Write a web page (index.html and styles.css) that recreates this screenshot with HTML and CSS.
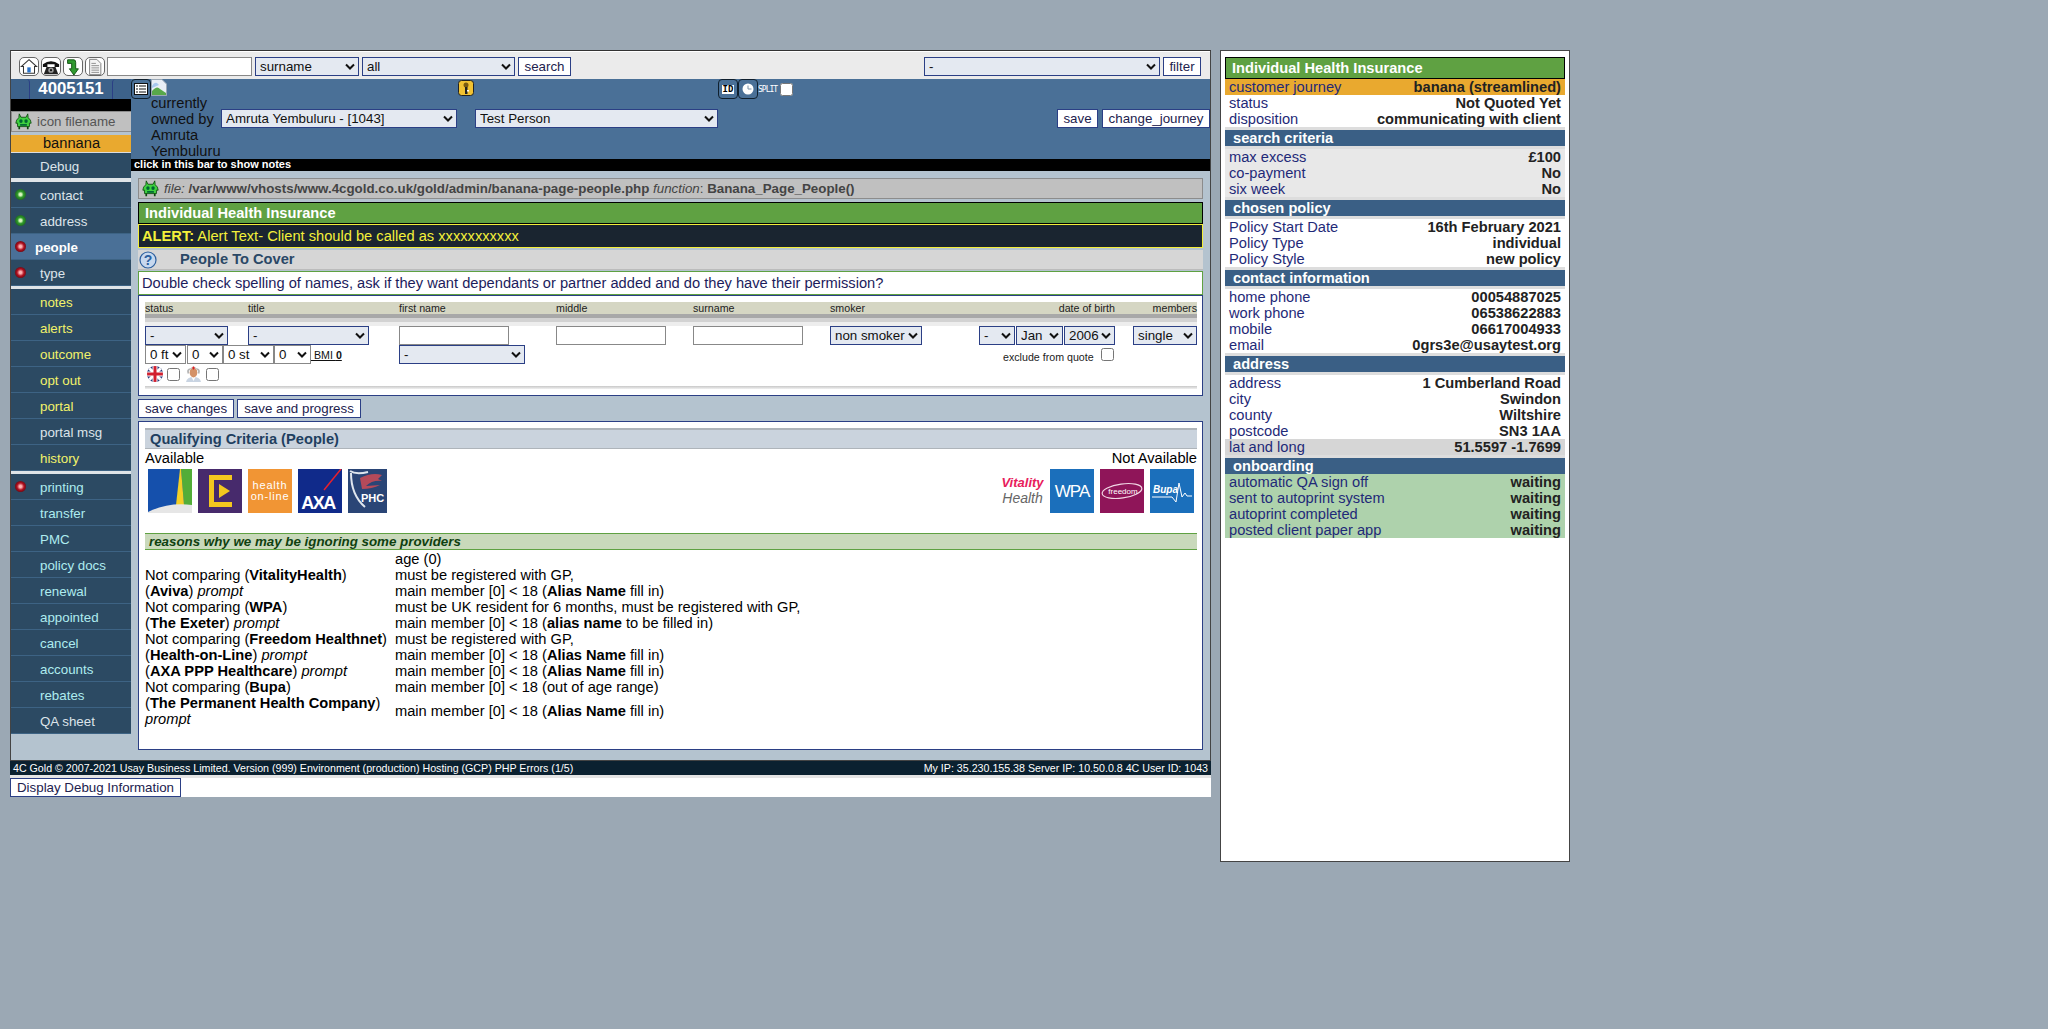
FILE: index.html
```html
<!DOCTYPE html>
<html lang="en">
<head>
  <meta charset="UTF-8" />
  <title>4C Gold - People</title>
  <link rel="stylesheet" href="styles.css">
</head>
<body>
<div class="page">

  <div class="main">
    <div class="shell">
      <div class="toolbar">
        <a class="tool-btn"><svg viewBox="0 0 20 20" width="18" height="17"><path d="M10 2 L19 10 L16.500 10 L16.500 18 L3.500 18 L3.500 10 L1 10 Z" fill="#fff" stroke="#333" stroke-width="1.200"/><rect x="8" y="11" width="4" height="6" fill="#2a72c8"/></svg></a>
        <a class="tool-btn"><svg viewBox="0 0 20 20" width="18" height="18"><path d="M1 7 Q10 0 19 7 L19 10 L14 10 L14 7 L6 7 L6 10 L1 10 Z" fill="#111"/><path d="M5 10 L15 10 L18 18 L2 18 Z" fill="#222"/><circle cx="10" cy="13.500" r="3" fill="#999"/><circle cx="10" cy="13.500" r="1.200" fill="#111"/></svg></a>
        <a class="tool-btn"><svg viewBox="0 0 20 20" width="18" height="18"><path d="M4 2 L11 2 Q13 2 13 5 L13 12 L16 12 L11 19 L6 12 L8.500 12 L8.500 6 L4 6 Z" fill="#2f9a2f" stroke="#0c4d0c"/></svg></a>
        <a class="tool-btn"><svg viewBox="0 0 20 20" width="18" height="18"><path d="M4 1.500 L12 1.500 L16.500 6 L16.500 18.500 L4 18.500 Z" fill="#f4f4f4" stroke="#777"/><path d="M6 6 H11 M6 8.500 H14.500 M6 11 H14.500 M6 13.500 H14.500 M6 16 H14.500" stroke="#888"/></svg></a>
        <input class="field search-input" type="text" />
        <select class="pick pick-surname"><option>surname</option></select>
        <select class="pick pick-all"><option>all</option></select>
        <button class="btn btn-search">search</button>
        <select class="pick pick-filter"><option>-</option></select>
        <button class="btn btn-filter">filter</button>
      </div>

      <div class="workspace">
        <div class="sidebar">
          <div class="id-row"><span class="id-tab"></span><span class="id-num">4005151</span><span class="id-tab id-tab-right"></span></div>
          <div class="black-gap"></div>
          <div class="icon-row">
            <svg class="alien" viewBox="0 0 20 20" width="17" height="17"><path d="M5 1 L7 5 H13 L15 1 L15.500 5.500 Q19 8 19 12 L17 12 L17 16 L3 16 L3 12 L1 12 Q1 8 4.500 5.500 Z" fill="#3fd13f" stroke="#0d4a0d"/><ellipse cx="7" cy="9.500" rx="2" ry="2.200" fill="#063"/><ellipse cx="13" cy="9.500" rx="2" ry="2.200" fill="#063"/><rect x="6" y="13" width="8" height="2" fill="#063"/><path d="M5 16 V19 M15 16 V19" stroke="#0d4a0d" stroke-width="2"/></svg>
            <span>icon filename</span>
          </div>
          <div class="journey-row">bannana</div>
          <a class="nav-item nav-grey nav-first">Debug</a>
          <div class="nav-sep nav-sep-thick"></div>
          <a class="nav-item nav-grey"><span class="led led-green"></span>contact</a>
          <a class="nav-item nav-grey"><span class="led led-green"></span>address</a>
          <a class="nav-item nav-active"><span class="led led-red"></span>people</a>
          <a class="nav-item nav-grey"><span class="led led-red"></span>type</a>
          <div class="nav-sep"></div>
          <a class="nav-item nav-yellow">notes</a>
          <a class="nav-item nav-yellow">alerts</a>
          <a class="nav-item nav-yellow">outcome</a>
          <a class="nav-item nav-yellow">opt out</a>
          <a class="nav-item nav-yellow">portal</a>
          <a class="nav-item nav-grey">portal msg</a>
          <a class="nav-item nav-yellow">history</a>
          <div class="nav-sep"></div>
          <a class="nav-item nav-cyan"><span class="led led-red"></span>printing</a>
          <a class="nav-item nav-cyan">transfer</a>
          <a class="nav-item nav-cyan">PMC</a>
          <a class="nav-item nav-cyan">policy docs</a>
          <a class="nav-item nav-cyan">renewal</a>
          <a class="nav-item nav-cyan">appointed</a>
          <a class="nav-item nav-cyan">cancel</a>
          <a class="nav-item nav-cyan">accounts</a>
          <a class="nav-item nav-cyan">rebates</a>
          <a class="nav-item nav-grey">QA sheet</a>
        </div>

        <div class="column">
          <div class="bluebar">
            <div class="blue-icons">
              <a class="mini-btn"><svg viewBox="0 0 14 12" width="14" height="12"><rect x="0.500" y="0.500" width="13" height="11" fill="#fff" stroke="#111"/><path d="M2 3 H4 M5 3 H12 M2 6 H4 M5 6 H12 M2 9 H4 M5 9 H12" stroke="#111" stroke-width="1.200"/></svg></a>
              <svg class="broken-img" viewBox="0 0 16 17" width="16" height="17"><path d="M0.500 0.500 H11 L15.500 5 V16.500 H0.500 Z" fill="#e8eef6" stroke="#9aa7b5"/><path d="M1 16 L1 12 Q6 6 9 10 L15 14 V16 Z" fill="#58a84a"/><path d="M1 7 Q3 3 6 4 L8 6 L1 9 Z" fill="#a8c8ee"/></svg>
              <span class="key-icon"><svg viewBox="0 0 16 16" width="16" height="16"><rect x="0.500" y="0.500" width="15" height="15" rx="3" fill="#f1c232" stroke="#222"/><circle cx="8" cy="5" r="2.500" fill="#7a5a10"/><rect x="7" y="7" width="2.500" height="7" fill="#222"/><rect x="9" y="10" width="2" height="1.500" fill="#fff"/></svg></span>
              <a class="mini-btn mini-id"><span>ID</span></a>
              <a class="mini-btn mini-clock"><svg viewBox="0 0 12 12" width="12" height="12"><circle cx="6" cy="6" r="5.500" fill="#fff"/><path d="M6 2.500 V6 H9.500" stroke="#7d93a8" fill="none"/></svg></a>
              <span class="split-label">SPLIT</span>
              <input class="tick tick-split" type="checkbox" />
            </div>
            <div class="blue-form">
              <div class="owner-text">currently owned by Amruta Yembuluru</div>
              <select class="pick pick-owner"><option>Amruta Yembuluru - [1043]</option></select>
              <select class="pick pick-person"><option>Test Person</option></select>
              <button class="btn btn-save">save</button>
              <button class="btn btn-journey">change_journey</button>
            </div>
          </div>
          <div class="notes-bar">click in this bar to show notes</div>

          <div class="content">
            <div class="file-bar">
              <svg class="alien" viewBox="0 0 20 20" width="17" height="17"><path d="M5 1 L7 5 H13 L15 1 L15.500 5.500 Q19 8 19 12 L17 12 L17 16 L3 16 L3 12 L1 12 Q1 8 4.500 5.500 Z" fill="#3fd13f" stroke="#0d4a0d"/><ellipse cx="7" cy="9.500" rx="2" ry="2.200" fill="#063"/><ellipse cx="13" cy="9.500" rx="2" ry="2.200" fill="#063"/><rect x="6" y="13" width="8" height="2" fill="#063"/><path d="M5 16 V19 M15 16 V19" stroke="#0d4a0d" stroke-width="2"/></svg>
              <span><i>file:</i> <b>/var/www/vhosts/www.4cgold.co.uk/gold/admin/banana-page-people.php</b> <i>function</i>: <b>Banana_Page_People()</b></span>
            </div>
            <div class="green-bar">Individual Health Insurance</div>
            <div class="alert-bar"><b>ALERT:</b> Alert Text- Client should be called as xxxxxxxxxxx</div>
            <div class="section-bar">
              <svg class="help-icon" viewBox="0 0 18 18" width="18" height="18"><circle cx="9" cy="9" r="8" fill="#c7d8ee" stroke="#2c5f9e" stroke-width="1.200"/><text x="9" y="14" class="help-mark">?</text></svg>
              <span>People To Cover</span>
            </div>
            <div class="hint-box">Double check spelling of names, ask if they want dependants or partner added and do they have their permission?</div>

            <div class="form-box">
              <div class="form-head">
                <span>status</span><span>title</span><span>first name</span><span>middle</span><span>surname</span><span>smoker</span><span class="right">date of birth</span><span class="right">members</span>
              </div>
              <div class="form-stripe"></div>
              <div class="form-row">
                <select class="pick pick-status"><option>-</option></select>
                <select class="pick pick-title"><option>-</option></select>
                <input class="field input-name" type="text" />
                <input class="field input-name" type="text" />
                <input class="field input-name" type="text" />
                <select class="pick pick-smoker"><option>non smoker</option></select>
                <div class="dob">
                  <select class="pick pick-day"><option>-</option></select>
                  <select class="pick pick-month"><option>Jan</option></select>
                  <select class="pick pick-year"><option>2006</option></select>
                </div>
                <select class="pick pick-members"><option>single</option></select>
              </div>
              <div class="form-row">
                <div class="size-cell">
                  <select class="pick plain pick-ft"><option>0 ft</option></select>
                  <select class="pick plain pick-in"><option>0</option></select>
                  <select class="pick plain pick-st"><option>0 st</option></select>
                  <select class="pick plain pick-lb"><option>0</option></select>
                  <span class="bmi">&nbsp;BMI <b>0</b></span>
                </div>
                <select class="pick pick-second"><option>-</option></select>
                <div class="exclude-cell"><span>exclude from quote</span><input class="tick" type="checkbox" /></div>
              </div>
              <div class="flag-row">
                <svg viewBox="0 0 16 16" width="16" height="16"><defs><clipPath id="disc"><circle cx="8" cy="8" r="8"/></clipPath></defs><g clip-path="url(#disc)"><rect width="16" height="16" fill="#28397a"/><path d="M0 0 L16 16 M16 0 L0 16" stroke="#fff" stroke-width="3"/><path d="M8 0 V16 M0 8 H16" stroke="#fff" stroke-width="5"/><path d="M8 0 V16 M0 8 H16" stroke="#d2202f" stroke-width="3"/></g></svg>
                <input class="tick" type="checkbox" />
                <svg class="nurse" viewBox="0 0 17 16" width="17" height="16"><path d="M1 16 Q2 11 8.500 11 Q15 11 16 16 Z" fill="#c9d4e2"/><path d="M6.500 11 L8.500 15 L10.500 11 Z" fill="#fff"/><ellipse cx="8.500" cy="6.500" rx="3.800" ry="5" fill="#d49268"/><path d="M4 4 Q8.500 -2 13 4 L11 2.500 H6 Z" fill="#f4f4f4" stroke="#aaa" stroke-width="0.500"/><path d="M8.500 0.500 V3.500 M7 2 H10" stroke="#d22" stroke-width="1.200"/><path d="M3.500 7.500 Q2 4 5 3 M13.500 7.500 Q15 4 12 3" stroke="#b5b5b5" fill="none" stroke-width="1.800"/></svg>
                <input class="tick" type="checkbox" />
              </div>
              <div class="form-rule"></div>
            </div>

            <div class="save-row">
              <button class="btn btn-changes">save changes</button>
              <button class="btn btn-progress">save and progress</button>
            </div>

            <div class="criteria-box">
              <div class="criteria-head">Qualifying Criteria (People)</div>
              <div class="avail-row"><span>Available</span><span>Not Available</span></div>
              <div class="logo-row">
                <div class="logo-group">
                  <svg class="logo" viewBox="0 0 44 44"><rect width="44" height="44" fill="#1550ac"/><path d="M33 0 H44 V37 L36 36 Z" fill="#52ad38"/><path d="M32 0 H33 L36 36 L28 36 Z" fill="#f3cf27"/><path d="M0 44 V43 Q20 33 44 36 V44 Z" fill="#e6e6e6"/></svg>
                  <svg class="logo" viewBox="0 0 44 44"><rect width="44" height="44" fill="#472a6c"/><path d="M11 6 H34 V11 H16 V33 H34 V38 H11 Z" fill="#f3c71f"/><path d="M21 15 L32 22 L21 29 Z" fill="#f3c71f"/></svg>
                  <svg class="logo" viewBox="0 0 44 44"><rect width="44" height="44" fill="#f19534"/><text x="22" y="20" class="logo-text logo-hol">health</text><text x="22" y="31" class="logo-text logo-hol">on-line</text></svg>
                  <svg class="logo" viewBox="0 0 44 44"><rect width="44" height="44" fill="#102a8a"/><path d="M43 0 L26 21" stroke="#e8202c" stroke-width="1.500"/><text x="20" y="40" class="logo-text logo-axa">AXA</text></svg>
                  <svg class="logo logo-phc" viewBox="0 0 39 44"><rect width="39" height="44" fill="#2a4576"/><path d="M2 2 Q8 6 20 3 M3 4 Q3 26 17 38" stroke="#dfe6ee" stroke-width="2" fill="none"/><path d="M12 9 Q24 3 34 6 L30 10 L34 12 Q24 11 18 17 L32 16 Q24 20 14 20 Z" fill="#b54a5a"/><text x="13" y="33" class="logo-text logo-phc-text">PHC</text></svg>
                </div>
                <div class="logo-group">
                  <svg class="logo logo-vitality" viewBox="0 0 42 44"><text x="21" y="18" class="logo-script logo-pink">Vitality</text><text x="21" y="34" class="logo-script logo-grey">Health</text></svg>
                  <svg class="logo" viewBox="0 0 44 44"><rect width="44" height="44" fill="#1b6fbb"/><text x="22" y="28" class="logo-text logo-wpa">WPA</text></svg>
                  <svg class="logo" viewBox="0 0 44 44"><rect width="44" height="44" fill="#8f1559"/><ellipse cx="22" cy="22" rx="20" ry="7" fill="none" stroke="#f1d6e4" stroke-width="1.200" transform="rotate(-8 22 22)"/><text x="23" y="25" class="logo-text logo-freedom">freedom</text></svg>
                  <svg class="logo" viewBox="0 0 44 44"><rect width="44" height="44" fill="#1b6fbb"/><text x="3" y="24" class="logo-text logo-bupa">Bupa</text><path d="M2 28 H22 L26 33 L29 14 L32 28 L35 24 L37 27 H42" stroke="#fff" fill="none"/></svg>
                </div>
              </div>
              <div class="reasons-head">reasons why we may be ignoring some providers</div>
              <div class="reasons">
                <div></div><div>age (0)</div>
                <div>Not comparing (<b>VitalityHealth</b>)</div><div>must be registered with GP,</div>
                <div>(<b>Aviva</b>) <i>prompt</i></div><div>main member [0] &lt; 18 (<b>Alias Name</b> fill in)</div>
                <div>Not comparing (<b>WPA</b>)</div><div>must be UK resident for 6 months, must be registered with GP,</div>
                <div>(<b>The Exeter</b>) <i>prompt</i></div><div>main member [0] &lt; 18 (<b>alias name</b> to be filled in)</div>
                <div>Not comparing (<b>Freedom Healthnet</b>)</div><div>must be registered with GP,</div>
                <div>(<b>Health-on-Line</b>) <i>prompt</i></div><div>main member [0] &lt; 18 (<b>Alias Name</b> fill in)</div>
                <div>(<b>AXA PPP Healthcare</b>) <i>prompt</i></div><div>main member [0] &lt; 18 (<b>Alias Name</b> fill in)</div>
                <div>Not comparing (<b>Bupa</b>)</div><div>main member [0] &lt; 18 (out of age range)</div>
                <div>(<b>The Permanent Health Company</b>) <i>prompt</i></div><div class="middle">main member [0] &lt; 18 (<b>Alias Name</b> fill in)</div>
              </div>
            </div>
          </div>
        </div>
      </div>
    </div>

    <div class="footer">
      <span>4C Gold © 2007-2021 Usay Business Limited. Version (999) Environment (production) Hosting (GCP) PHP Errors (1/5)</span>
      <span>My IP: 35.230.155.38 Server IP: 10.50.0.8 4C User ID: 1043</span>
    </div>
    <div class="debug-strip"><button class="btn btn-debug">Display Debug Information</button></div>
  </div>

  <div class="panel">
    <div class="panel-title">Individual Health Insurance</div>
    <div class="row row-orange"><span>customer journey</span><b>banana (streamlined)</b></div>
    <div class="row"><span>status</span><b>Not Quoted Yet</b></div>
    <div class="row"><span>disposition</span><b>communicating with client</b></div>
    <div class="panel-head">search criteria</div>
    <div class="row row-grey"><span>max excess</span><b>£100</b></div>
    <div class="row row-grey"><span>co-payment</span><b>No</b></div>
    <div class="row row-grey"><span>six week</span><b>No</b></div>
    <div class="panel-head">chosen policy</div>
    <div class="row"><span>Policy Start Date</span><b>16th February 2021</b></div>
    <div class="row"><span>Policy Type</span><b>individual</b></div>
    <div class="row"><span>Policy Style</span><b>new policy</b></div>
    <div class="panel-head">contact information</div>
    <div class="row"><span>home phone</span><b>00054887025</b></div>
    <div class="row"><span>work phone</span><b>06538622883</b></div>
    <div class="row"><span>mobile</span><b>06617004933</b></div>
    <div class="row"><span>email</span><b>0grs3e@usaytest.org</b></div>
    <div class="panel-head">address</div>
    <div class="row"><span>address</span><b>1 Cumberland Road</b></div>
    <div class="row"><span>city</span><b>Swindon</b></div>
    <div class="row"><span>county</span><b>Wiltshire</b></div>
    <div class="row"><span>postcode</span><b>SN3 1AA</b></div>
    <div class="row row-dark"><span>lat and long</span><b>51.5597 -1.7699</b></div>
    <div class="panel-head panel-head-last">onboarding</div>
    <div class="row row-green"><span>automatic QA sign off</span><b>waiting</b></div>
    <div class="row row-green"><span>sent to autoprint system</span><b>waiting</b></div>
    <div class="row row-green"><span>autoprint completed</span><b>waiting</b></div>
    <div class="row row-green"><span>posted client paper app</span><b>waiting</b></div>
  </div>

</div>
</body>
</html>
```

FILE: styles.css
```css
:root {
  --page-bg: #9ba8b4;
  --content-bg: #b4c3cf;
  --blue: #4a7097;
  --head-blue: #3a5f85;
  --nav-bg: #2c4a63;
  --nav-line: #3d6384;
  --navy: #2b3f85;
  --label: #1f2a78;
  --green: #5fa142;
  --orange: #e9a92f;
  --field-bg: #e4e9f1;
}

* {
  box-sizing: border-box;
}

body {
  margin: 0;
  background-color: var(--page-bg);
  font-family: "Liberation Sans", Arial, sans-serif;
  font-size: 14.67px;
  line-height: 16px;
  color: #000;
}

.page {
  display: flex;
  align-items: flex-start;
  gap: 9px;
  padding: 50px 0 0 10px;
}

/* main window */

.main {
  width: 1201px;
}

.shell {
  border: 1px solid #444;
  border-top-color: #333;
}

.toolbar {
  display: flex;
  align-items: center;
  height: 28px;
  padding: 2px 9px 0 8px;
  background-color: #ebebeb;
  border-top: 1px solid #fff;
}

.tool-btn {
  display: flex;
  align-items: center;
  justify-content: center;
  width: 20px;
  height: 19px;
  margin-right: 2px;
  background-color: #fff;
  border: 1px solid #666;
  border-radius: 5px;
}

.field {
  height: 19px;
  padding: 0 4px;
  background-color: #fff;
  border: 1px solid #888;
  border-radius: 0;
  font: inherit;
}

.pick {
  appearance: none;
  height: 19px;
  padding: 0 14px 0 4px;
  margin: 0;
  background-color: var(--field-bg);
  background-image: url("data:image/svg+xml,%3Csvg xmlns='http://www.w3.org/2000/svg' width='10' height='7'%3E%3Cpath d='M1 1.500 L5 5.500 L9 1.500' fill='none' stroke='%23111' stroke-width='2'/%3E%3C/svg%3E");
  background-repeat: no-repeat;
  background-position: right 3px center;
  border: 1px solid var(--navy);
  border-radius: 0;
  font: 13.33px "Liberation Sans", Arial, sans-serif;
  color: #111;
}

.plain {
  background-color: #fff;
  border-color: #888;
}

.btn {
  height: 19px;
  padding: 0;
  background-color: #fff;
  border: 1px solid var(--navy);
  border-radius: 0;
  font: 13.33px "Liberation Sans", Arial, sans-serif;
  color: #22224e;
}

.search-input { width: 145px; }
.pick-surname { width: 104px; margin-left: 3px; }
.pick-all { width: 153px; margin-left: 3px; }
.btn-search { width: 53px; margin-left: 3px; }
.pick-filter { width: 236px; margin-left: auto; }
.btn-filter { width: 38px; margin-left: 3px; }

.workspace {
  display: flex;
  height: 681px;
  background-color: var(--content-bg);
}

/* left nav */

.sidebar {
  width: 120px;
  flex-shrink: 0;
  font-size: 13.33px;
}

.id-row {
  display: flex;
  height: 20px;
  background-color: #3d628a;
  color: #fff;
  font-size: 16.8px;
  font-weight: bold;
  line-height: 20px;
}

.id-tab {
  width: 19px;
  border-right: 1px solid #2b3f85;
  border-radius: 0 4px 0 0;
}

.id-tab-right {
  border-right: 0;
  border-left: 1px solid #2b3f85;
  border-radius: 4px 0 0 0;
}

.id-num {
  width: 82px;
  text-align: center;
}

.black-gap {
  height: 12px;
  background-color: #000;
}

.icon-row {
  display: flex;
  align-items: center;
  gap: 5px;
  height: 21px;
  padding-left: 3px;
  background-color: #c0c0c0;
  border: 1px solid #8c8c8c;
  border-right: 0;
  color: #555;
}

.journey-row {
  height: 18px;
  margin-top: 3px;
  padding-left: 1px;
  background-color: var(--orange);
  border-bottom: 1px solid #ddd;
  font-size: 14.67px;
  line-height: 17px;
  text-align: center;
  color: #111;
}

.nav-item {
  position: relative;
  display: block;
  height: 26px;
  padding-left: 29px;
  background-color: var(--nav-bg);
  border-bottom: 1px solid var(--nav-line);
  line-height: 27px;
}

.nav-first {
  height: 25px;
  border-bottom: 0;
}

.nav-grey { color: #dde4ea; }
.nav-yellow { color: #f2f26a; }
.nav-cyan { color: #aeecef; }

.nav-active {
  padding-left: 24px;
  background-color: var(--blue);
  color: #fff;
  font-weight: bold;
}

.nav-sep {
  height: 3px;
  background-color: #dfe4e8;
}

.nav-sep-thick {
  height: 4px;
}

.led {
  position: absolute;
  top: 7px;
  left: 4px;
  width: 11px;
  height: 11px;
  border-radius: 50%;
}

.led-green { background: radial-gradient(circle, #d8f5c0 0, #d8f5c0 15%, #2f9a2a 40%, #0f3d1c 100%); }
.led-red { background: radial-gradient(circle, #ffb0b0 0, #ffb0b0 15%, #b01020 45%, #2a0508 100%); }

/* right of nav */

.column {
  flex: 1;
  min-width: 0;
}

.bluebar {
  height: 80px;
  background-color: var(--blue);
}

.blue-icons {
  display: flex;
  align-items: flex-start;
  height: 16px;
}

.mini-btn {
  display: flex;
  align-items: center;
  justify-content: center;
  flex-shrink: 0;
  width: 20px;
  height: 20px;
  background-color: var(--blue);
  border: 1px solid #10202e;
  border-radius: 4px;
}

.broken-img {
  flex-shrink: 0;
}

.key-icon {
  margin: 1px 0 0 291px;
  height: 16px;
}

.mini-id {
  margin-left: 244px;
}

.mini-id span {
  padding: 0 1px;
  background-color: #fff;
  font: bold 9px/9px "DejaVu Sans Mono", monospace;
  color: #000;
}

.split-label {
  width: 22px;
  font: 8px/22px "DejaVu Sans Mono", monospace;
  letter-spacing: -1px;
  color: #fff;
}

.tick {
  width: 13px;
  height: 13px;
  margin: 0;
  flex-shrink: 0;
}

.tick-split {
  margin-top: 4px;
}

.blue-form {
  display: flex;
  align-items: flex-start;
  padding-left: 20px;
}

.owner-text {
  width: 70px;
  height: 64px;
  color: #111;
}

.blue-form .pick,
.blue-form .btn {
  margin-top: 14px;
}

.pick-owner { width: 236px; }
.pick-person { width: 243px; margin-left: 18px; }
.btn-save { width: 41px; margin-left: auto; }
.btn-journey { width: 108px; margin-left: 4px; }

.notes-bar {
  height: 12px;
  padding-left: 3px;
  background-color: #000;
  font-size: 11px;
  font-weight: bold;
  line-height: 11px;
  color: #fff;
}

.content {
  padding: 7px 7px 0 7px;
}

.file-bar {
  display: flex;
  align-items: center;
  gap: 5px;
  height: 21px;
  padding-left: 3px;
  background-color: #c0c0c0;
  border: 1px solid #8c8c8c;
  font-size: 13.33px;
  color: #444;
}

.green-bar {
  height: 22px;
  margin-top: 3px;
  padding-left: 6px;
  background-color: var(--green);
  border: 1px solid #000;
  font-weight: bold;
  line-height: 20px;
  color: #fff;
}

.alert-bar {
  height: 24px;
  padding-left: 3px;
  background-color: #1a2530;
  border: 1px solid #f3ee3a;
  line-height: 22px;
  color: #f4f03a;
}

.section-bar {
  display: flex;
  align-items: center;
  height: 20px;
  margin-top: 2px;
  background-color: #d6d6d6;
  border-bottom: 1px solid #bbb;
  font-weight: bold;
  color: #2a4866;
}

.help-icon {
  margin-left: 1px;
}

.help-mark {
  font-size: 14px;
  font-weight: bold;
  text-anchor: middle;
  fill: #2c5f9e;
}

.section-bar span {
  margin: 0 0 2px 23px;
}

.hint-box {
  height: 24px;
  margin-top: 1px;
  padding-left: 3px;
  background-color: #fff;
  border: 1px solid var(--green);
  line-height: 22px;
  color: #1c1c5c;
}

/* people form */

.form-box {
  height: 101px;
  padding: 6px 5px 0 6px;
  background-color: #fff;
  border: 1px solid var(--navy);
}

.form-head,
.form-row {
  display: grid;
  grid-template-columns: 103px 151px 157px 137px 137px 149px 136px 82px;
}

.form-head {
  height: 12px;
  background-color: #d5d6c3;
  font-size: 10.67px;
  line-height: 12px;
  color: #222;
}

.form-head .right {
  text-align: right;
}

.form-stripe {
  height: 12px;
  background: linear-gradient(#a8a8a8 0, #a8a8a8 4px, #d2d2d2 4px, #d2d2d2 8px, #ededed 8px);
}

.form-row {
  height: 19px;
}

.pick-status { width: 83px; }
.pick-title { width: 121px; }
.input-name { width: 110px; }
.pick-smoker { width: 92px; }
.pick-members { width: 64px; justify-self: end; }
.pick-second { width: 126px; grid-column: 3; }

.dob {
  display: flex;
  gap: 1px;
}

.pick-day { width: 36px; }
.pick-month { width: 47px; }
.pick-year { width: 51px; }

.size-cell {
  display: flex;
  grid-column: 1 / 3;
  white-space: nowrap;
}

.pick-ft { width: 41px; }
.pick-in { width: 36px; margin-left: 1px; }
.pick-st { width: 51px; }
.pick-lb { width: 37px; }

.bmi {
  font-size: 10.67px;
  line-height: 21px;
  text-decoration: underline;
  color: #111;
}

.exclude-cell {
  display: flex;
  grid-column: 7 / 9;
  gap: 7px;
  padding: 3px 0 0 24px;
  font-size: 10.67px;
  line-height: 18px;
  color: #222;
}

.flag-row {
  display: flex;
  align-items: center;
  height: 20px;
  padding-left: 2px;
}

.flag-row .tick {
  margin-left: 4px;
}

.nurse {
  margin-left: 5px;
}

.form-rule {
  height: 3px;
  margin-top: 2px;
  background: linear-gradient(#c8c8c8, #f0f0f0);
}

.save-row {
  display: flex;
  gap: 3px;
  margin-top: 3px;
}

.btn-changes { width: 96px; }
.btn-progress { width: 124px; }

/* qualifying criteria */

.criteria-box {
  height: 329px;
  margin-top: 3px;
  padding: 6px 5px 0 6px;
  background-color: #fff;
  border: 1px solid var(--navy);
}

.criteria-head {
  height: 21px;
  padding-left: 5px;
  background-color: #cad3dd;
  border-top: 2px solid #aeb4ba;
  border-bottom: 1px solid #aeb4ba;
  font-weight: bold;
  line-height: 18px;
  color: #1f3f60;
}

.avail-row {
  display: flex;
  justify-content: space-between;
  margin-top: 1px;
}

.logo-row {
  display: flex;
  justify-content: space-between;
  padding: 3px 3px 0;
}

.logo-group {
  display: flex;
  gap: 6px;
}

.logo {
  display: block;
  width: 44px;
  height: 44px;
}

.logo-phc { width: 39px; }
.logo-vitality { width: 43px; }

.logo-text {
  font-family: "Liberation Sans", Arial, sans-serif;
  text-anchor: middle;
  fill: #fff;
}

.logo-hol { font-size: 11px; letter-spacing: 0.8px; }
.logo-axa { font-size: 18px; font-weight: bold; letter-spacing: -1.500px; }
.logo-phc-text { font-size: 11px; font-weight: bold; text-anchor: start; }
.logo-wpa { font-size: 17px; letter-spacing: -1px; }
.logo-freedom { font-size: 8px; }
.logo-bupa { font-size: 10px; font-style: italic; font-weight: bold; text-anchor: start; }

.logo-script {
  font-family: "Liberation Sans", Arial, sans-serif;
  font-style: italic;
  font-size: 13px;
  text-anchor: middle;
}

.logo-pink { fill: #e8205c; font-weight: bold; }
.logo-grey { fill: #666; font-size: 14px; }

.reasons-head {
  height: 17px;
  margin-top: 20px;
  padding-left: 4px;
  background-color: #c9d9bb;
  border-top: 1px solid var(--green);
  border-bottom: 1px solid var(--green);
  font-size: 13.33px;
  font-weight: bold;
  font-style: italic;
  line-height: 15px;
  color: #0f4010;
}

.reasons {
  display: grid;
  grid-template-columns: 250px 1fr;
  margin-top: 1px;
}

.reasons > div:nth-child(odd) {
  padding-right: 8px;
}

.middle {
  align-self: center;
}

.footer {
  display: flex;
  justify-content: space-between;
  height: 14px;
  padding: 0 3px;
  background-color: #0b2130;
  font-size: 10.67px;
  line-height: 14px;
  color: #fff;
}

.debug-strip {
  height: 22px;
  background-color: #fff;
  border-top: 3px solid #e4e4e4;
}

.btn-debug {
  display: block;
  width: 171px;
}

/* summary panel */

.panel {
  width: 350px;
  height: 812px;
  padding: 6px 4px 0;
  background-color: #fff;
  border: 1px solid #444;
}

.panel-title {
  height: 22px;
  padding-left: 6px;
  background-color: var(--green);
  border: 1px solid #000;
  font-weight: bold;
  line-height: 20px;
  color: #fff;
}

.row {
  display: flex;
  justify-content: space-between;
  height: 16px;
  padding: 0 4px;
  color: var(--label);
}

.row b {
  color: #222;
}

.row-orange { background-color: var(--orange); }
.row-grey { background-color: #e8e8e8; }
.row-dark { background-color: #d6d6d6; }
.row-green { background-color: #aed2ac; }

.panel-head {
  height: 22px;
  padding-left: 8px;
  background-color: var(--head-blue);
  border-top: 3px solid #ddd;
  border-bottom: 3px solid #ddd;
  font-weight: bold;
  color: #fff;
}

.panel-head-last {
  height: 19px;
  border-bottom: 0;
}
```
